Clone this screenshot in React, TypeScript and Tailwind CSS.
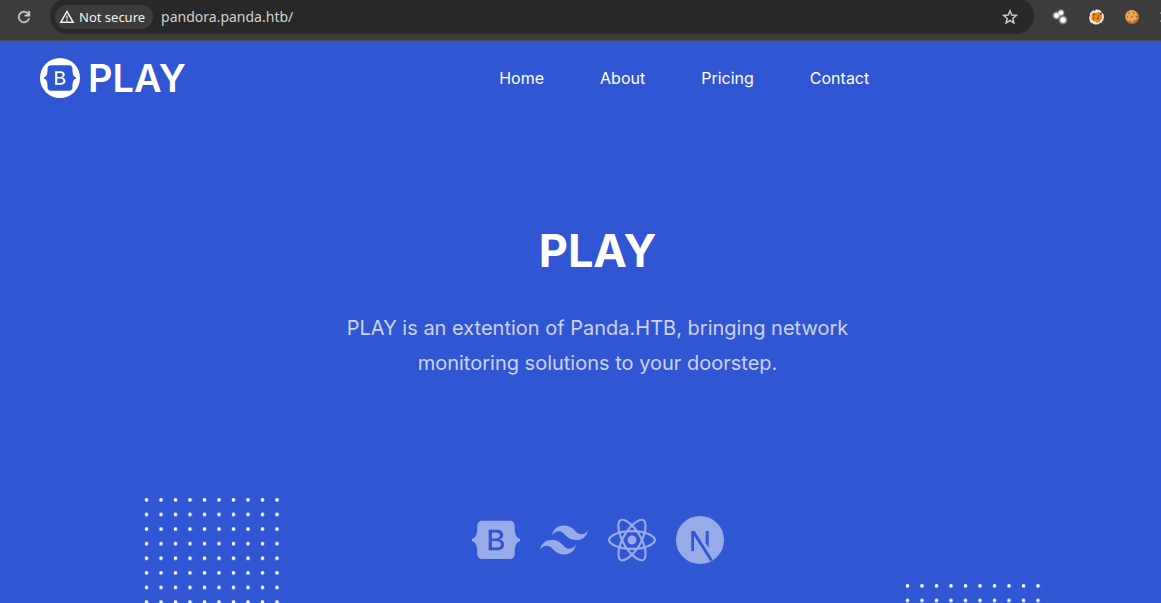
import { SiBootstrap, SiReact, SiTailwindcss } from "react-icons/si";

const navLinks = ["Home", "About", "Pricing", "Contact"];

function DotGrid({ id, className }: { id: string; className: string }) {
  return (
    <svg className={className} width="136" height="136" viewBox="0 0 136 136" aria-hidden="true">
      <defs>
        <pattern id={id} width="14.5" height="14.6" patternUnits="userSpaceOnUse">
          <circle cx="2.5" cy="2.8" r="1.8" fill="white" />
        </pattern>
      </defs>
      <rect width="136" height="136" fill={`url(#${id})`} />
    </svg>
  );
}

function NextIcon() {
  return (
    <svg width="48" height="48" viewBox="0 0 144 144" aria-hidden="true">
      <mask id="next-n">
        <rect width="144" height="144" fill="white" />
        <path d="M46 45H56L110 131L103 136L54 59V105H46ZM89 45H98V95L89 82Z" fill="black" />
      </mask>
      <circle cx="72" cy="72" r="72" fill="currentColor" mask="url(#next-n)" />
    </svg>
  );
}

function BrowserBar() {
  return (
    <div className="flex h-[41px] items-start overflow-hidden border-b border-[#4a4a46] bg-[#3c3c3c] font-['Noto_Sans',sans-serif]">
      <button aria-label="Reload" className="flex h-[34px] w-[50px] shrink-0 items-center justify-center pr-0.5 text-[#c7c7c7]">
        <svg width="18" height="18" viewBox="0 0 24 24" fill="currentColor">
          <path d="M12 20q-3.350 0-5.675-2.325T4 12t2.325-5.675T12 4q1.725 0 3.300.713T18 6.750V4h2v7h-7V9h4.200q-.8-1.400-2.188-2.200T12 6Q9.500 6 7.750 7.750T6 12t1.750 4.250T12 18q1.925 0 3.475-1.100T17.650 14h2.100q-.7 2.650-2.850 4.325T12 20" stroke="currentColor" strokeWidth=".5" />
        </svg>
      </button>
      <div className="-mt-0.5 flex h-9 flex-1 items-center rounded-full bg-[#282828] pt-0.5 pr-4 pl-[5px]">
        <button className="flex h-6 shrink-0 items-center gap-1 rounded-full bg-[#3c3c3c] pr-2 pl-1 text-[13px] leading-6 font-normal text-[#f1f1f1]">
          <svg width="16" height="16" viewBox="0 0 16 16" fill="none" stroke="currentColor" strokeWidth="1.500">
            <path d="M8 2.500L14.200 13.300H1.800Z" />
            <path d="M8 6.500V9.800M8 10.600V12" strokeWidth="1.300" />
          </svg>
          Not secure
        </button>
        <input
          aria-label="Address"
          defaultValue="pandora.panda.htb/"
          className="ml-2 h-6 min-w-0 flex-1 bg-transparent pb-0.5 text-sm text-[#d0d0d0] outline-none"
        />
        <button aria-label="Bookmark this page" className="text-[#c7c7c7]">
          <svg width="16" height="16" viewBox="0 0 16 16" fill="none" stroke="currentColor" strokeWidth="1.500">
            <path d="M8 1.800L9.750 6.050L14.300 6.400L10.850 9.400L11.900 13.900L8 11.500L4.100 13.900L5.150 9.400L1.700 6.400L6.250 6.050Z" />
          </svg>
        </button>
      </div>
      <div className="flex h-[34px] w-[127px] shrink-0 items-center gap-5 pl-[18px]">
        <button aria-label="Circles extension">
          <svg width="16" height="16" viewBox="0 0 16 16">
            <defs>
              <radialGradient id="ball">
                <stop offset=".4" stopColor="#fff" />
                <stop offset="1" stopColor="#aaa" stopOpacity=".05" />
              </radialGradient>
            </defs>
            <circle cx="4.500" cy="6.500" r="4.500" fill="url(#ball)" />
            <circle cx="9" cy="3.800" r="4" fill="url(#ball)" />
            <circle cx="11" cy="11" r="5" fill="url(#ball)" />
          </svg>
        </button>
        <button aria-label="Fox extension">
          <svg width="16" height="16" viewBox="0 0 16 16">
            <circle cx="8.500" cy="8" r="6.500" fill="#e8841a" />
            <circle cx="8.500" cy="8" r="6.600" fill="none" stroke="#e6e8ea" strokeWidth="1.800" strokeDasharray="6 1.500" />
            <path d="M2 9L2 13L6 15L9 13L5 12ZM9 15L14 13L14 10ZM4 3L8 4L12 2L9 1ZM2 5L4 7L3 9Z" fill="#eee" />
            <path d="M5 6L7 5M10 7H11M12 4L13 6M5 9L6 9M9 10L11 9" stroke="#50320f" strokeWidth="1" />
          </svg>
        </button>
        <button aria-label="Cookie extension">
          <svg width="16" height="16" viewBox="0 0 16 16">
            <circle cx="8" cy="8" r="7" fill="#ba7230" />
            <circle cx="7.500" cy="7" r="6" fill="#eba653" />
            <g fill="#8a5127">
              <circle cx="5" cy="4" r=".7" />
              <circle cx="9.500" cy="4" r=".7" />
              <circle cx="3.500" cy="8" r=".7" />
              <circle cx="8" cy="8" r=".8" />
              <circle cx="12.500" cy="7.500" r=".8" />
              <circle cx="6" cy="12" r=".7" />
              <circle cx="10.500" cy="11.500" r=".8" />
            </g>
          </svg>
        </button>
        <div className="ml-auto flex flex-col gap-1.5">
          <span className="h-0.5 w-px bg-[#777]" />
          <span className="h-0.5 w-px bg-[#777]" />
        </div>
      </div>
    </div>
  );
}

export default function App() {
  return (
    <div className="flex min-h-screen flex-col bg-[#3056d3] font-[Inter,sans-serif] text-white">
      <BrowserBar />
      <div className="relative flex-1 overflow-hidden">
        <header className="flex h-[74px] items-center px-10">
          <a href="#home" className="flex items-center gap-2">
            <span className="flex size-10 items-center justify-center rounded-full bg-white text-[#3056d3]">
              <SiBootstrap size={32} aria-hidden="true" />
            </span>
            <span className="text-[38px] leading-10 font-semibold">PLAY</span>
          </a>
          <nav className="absolute left-[43%] flex gap-14 text-base">
            {navLinks.map((label) => (
              <a key={label} href={`#${label.toLowerCase()}`}>
                {label}
              </a>
            ))}
          </nav>
        </header>
        <main className="flex flex-col items-center pt-[106px] pl-[34px] text-center">
          <h1 className="text-[45px] leading-[60px] font-bold">PLAY</h1>
          <p className="mt-[30px] max-w-[540px] text-xl leading-[35px] text-white/75">
            PLAY is an extention of Panda.HTB, bringing network monitoring solutions to your doorstep.
          </p>
          <div className="mt-[135px] flex items-center gap-5 text-white/50">
            <a href="#bootstrap" aria-label="Bootstrap"><SiBootstrap size={48} /></a>
            <a href="#tailwind" aria-label="Tailwind CSS"><SiTailwindcss size={48} /></a>
            <a href="#react" aria-label="React"><SiReact size={48} /></a>
            <a href="#next" aria-label="Next.js"><NextIcon /></a>
          </div>
        </main>
        <DotGrid id="dots-left" className="absolute top-[456px] left-36" />
        <DotGrid id="dots-right" className="absolute top-[542px] right-[120px]" />
      </div>
    </div>
  );
}
